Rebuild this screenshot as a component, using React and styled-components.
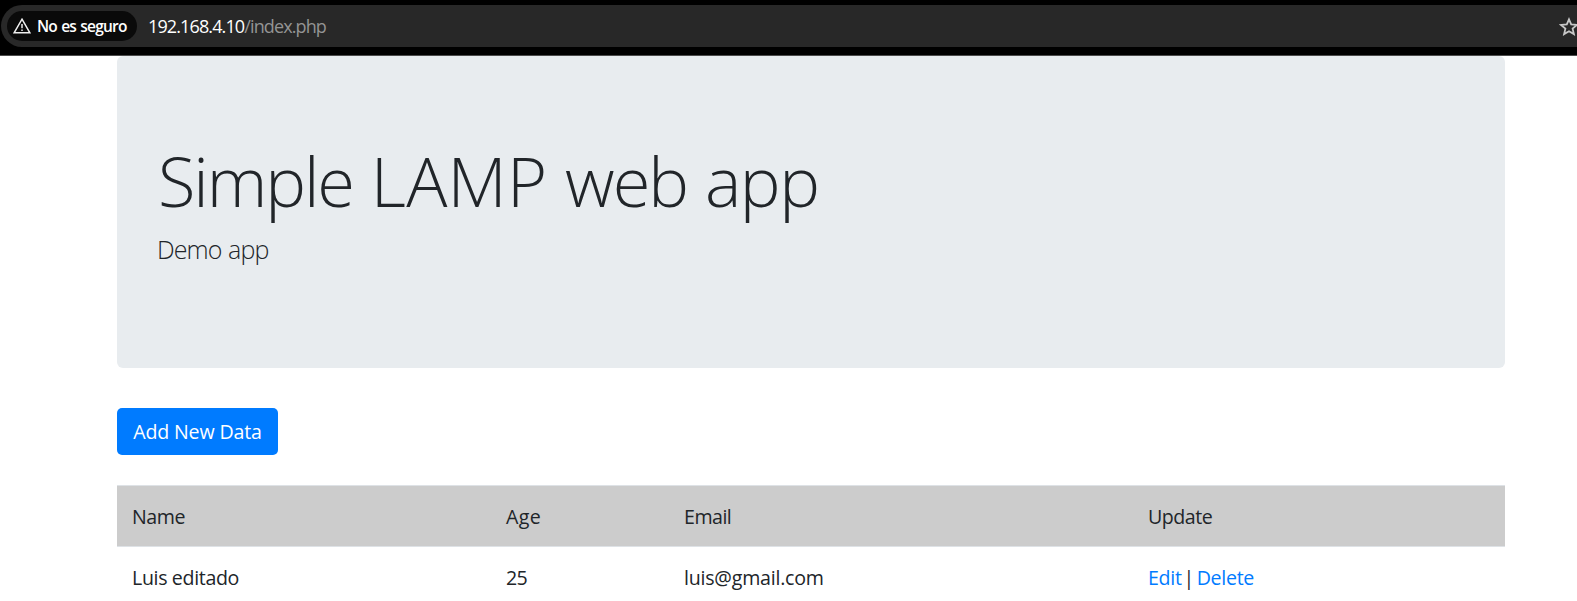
import React from "react";
import styled, { createGlobalStyle } from "styled-components";

const Global = createGlobalStyle`
  *, *::before, *::after { box-sizing: border-box; }
  body {
    margin: 0;
    background: #fff;
    color: #212529;
    font: 400 19.6px/30px "Segoe UI", "Open Sans", "Noto Sans", sans-serif;
    overflow: hidden;
  }
`;

const BrowserBar = styled.header`
  height: 56px;
  padding: 5px 0 0 1px;
  background: #000;
  border-bottom: 1px solid #4b4b4b;
`;

const Omnibox = styled.div`
  display: flex;
  align-items: center;
  height: 42px;
  padding-left: 6px;
  background: #282828;
  border-radius: 21px 0 0 21px;
  overflow: hidden;
`;

const SecurityChip = styled.div`
  display: flex;
  flex: none;
  align-items: center;
  width: 130px;
  height: 30px;
  padding-left: 6px;
  gap: 6px;
  border-radius: 15px;
  background: #0a0a0a;
  color: #fff;
  font-size: 15.5px;
  font-weight: 600;
  line-height: 30px;
  letter-spacing: -0.8px;
  word-spacing: 1px;
  white-space: nowrap;
`;

const Address = styled.div`
  flex: 1;
  margin-left: 11px;
  padding-top: 1px;
  color: #fff;
  font-size: 18px;
  line-height: 41px;
  letter-spacing: -0.88px;
  white-space: nowrap;
`;

const Path = styled.span`
  color: #949494;
  letter-spacing: -0.88px;
`;

const Star = styled.svg`
  flex: none;
  margin: 1px -2px 0 0;
`;

const Container = styled.main`
  width: 1388px;
  margin-left: 117px;
`;

const Jumbotron = styled.section`
  height: 312px;
  padding: 83px 40px 0 41px;
  margin-bottom: 40px;
  border-radius: 6px;
  background: #e8ecef;
`;

const Title = styled.h1`
  margin: 0 0 8px;
  font-size: 68.6px;
  font-weight: 300;
  line-height: 84px;
  white-space: nowrap;
`;

const Word = styled.span`
  letter-spacing: ${(p) => p.$tracking}px;
`;

const Lead = styled.p`
  margin: 0 0 0 -1px;
  font-size: 25px;
  font-weight: 300;
  line-height: 37px;
  letter-spacing: -0.9px;
  word-spacing: 1px;
`;

const Button = styled.button`
  display: block;
  width: 161px;
  height: 47px;
  margin: 0 0 30px;
  padding: 1px 0 0;
  border: 0;
  border-radius: 5px;
  background: #007bff;
  color: #fff;
  font: inherit;
  letter-spacing: -0.15px;
  white-space: nowrap;
`;

const Table = styled.table`
  width: 100%;
  table-layout: fixed;
  border-collapse: separate;
  border-spacing: 0;
`;

const Row = styled.tr`
  background: ${(p) => (p.$head ? "#ccc" : "#fff")};
`;

const Cell = styled.td`
  height: 61px;
  padding: 2px 15px 0;
  border-top: 1px solid #dee2e6;
  letter-spacing: ${(p) => p.$tracking || 0}px;
  white-space: nowrap;
`;

const Link = styled.a`
  color: #007bff;
  text-decoration: none;
`;

const Divider = styled.span`
  margin: 0 -2px 0 -3px;
`;

export default function App() {
  return (
    <>
      <Global />
      <BrowserBar>
        <Omnibox>
          <SecurityChip>
            <svg width="18" height="18" viewBox="0 0 18 18" fill="none" stroke="#eee" strokeWidth="1.5">
              <path d="M9 2.2 16.9 15.8H1.1Z" />
              <path d="M9 7v4.2M9 12.4v1.6" />
            </svg>
            <span>No es seguro</span>
          </SecurityChip>
          <Address>192.168.4.10<Path>/index.php</Path></Address>
          <Star width="20" height="20" viewBox="0 0 20 20" fill="none" stroke="#c7c7c7" strokeWidth="1.8">
            <path d="m10 2.3 2.2 5.1 5.8.5-4.4 3.7 1.3 5.5-4.9-2.9-4.9 2.9 1.3-5.5L2 7.9l5.8-.5Z" />
          </Star>
        </Omnibox>
      </BrowserBar>
      <Container>
        <Jumbotron>
          <Title>
            <Word $tracking={-2.1}>Simple</Word> <Word $tracking={0.2}>LAMP</Word>{" "}
            <Word $tracking={-2}>web</Word> <Word $tracking={-1.5}>app</Word>
          </Title>
          <Lead>Demo app</Lead>
        </Jumbotron>
        <Button>Add New Data</Button>
        <Table>
          <colgroup>
            <col style={{ width: 374 }} />
            <col style={{ width: 178 }} />
            <col style={{ width: 464 }} />
            <col />
          </colgroup>
          <tbody>
            <Row $head>
              <Cell $tracking={-0.4}>Name</Cell>
              <Cell $tracking={0.4}>Age</Cell>
              <Cell $tracking={-0.5}>Email</Cell>
              <Cell $tracking={-0.5}>Update</Cell>
            </Row>
            <Row>
              <Cell $tracking={-0.35}>Luis editado</Cell>
              <Cell $tracking={-0.6}>25</Cell>
              <Cell $tracking={-0.22}>luis@gmail.com</Cell>
              <Cell $tracking={-0.3}><Link>Edit</Link> <Divider>|</Divider> <Link>Delete</Link></Cell>
            </Row>
          </tbody>
        </Table>
      </Container>
    </>
  );
}
